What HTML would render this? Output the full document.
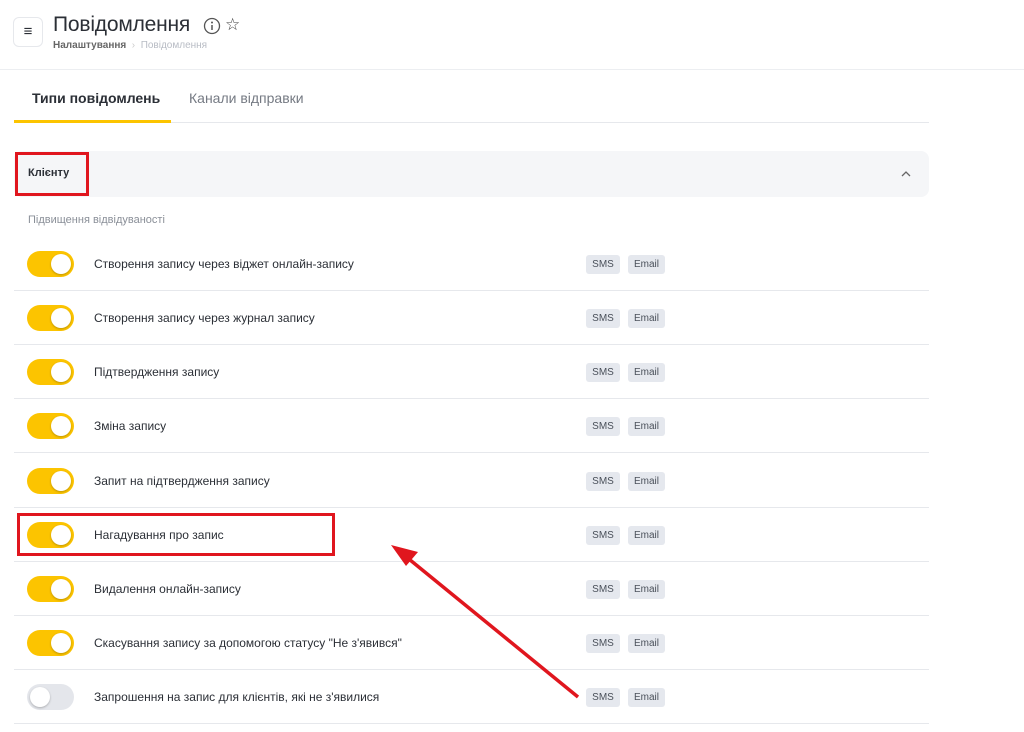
<!DOCTYPE html>
<html><head><meta charset="utf-8"><style>
*{margin:0;padding:0;box-sizing:border-box}
body{width:1024px;height:732px;background:#fff;font-family:"Liberation Sans",sans-serif;position:relative;overflow:hidden;color:#2b2f36}
.abs{position:absolute}
.row{position:absolute;left:14px;width:915px;height:54px;border-bottom:1px solid #e6e8ec}
.tg{position:absolute;left:13px;top:14px;width:47px;height:26px;border-radius:13px;background:#fcc400}
.tg::after{content:"";position:absolute;right:3px;top:3px;width:20px;height:20px;border-radius:50%;background:#fff;box-shadow:0 1px 2px rgba(0,0,0,.25)}
.tg.off{background:#e4e6eb}
.tg.off::after{right:auto;left:3px}
.lbl{position:absolute;left:80px;top:20px;font-size:12px;color:#2b2f36}
.b{position:absolute;top:18px;height:19px;background:#e5e8ee;border-radius:3px;font-size:10px;color:#4a505a;line-height:20px;text-align:center}
.s{left:572px;width:34px}.e{left:614px;width:37px}
</style></head><body>
<div class="abs" style="left:13px;top:17px;width:30px;height:30px;border:1px solid #e6e8ec;border-radius:6px;text-align:center;line-height:28px;font-size:15px;font-weight:bold">≡</div>
<div class="abs" style="left:53px;top:13px;font-size:21px;letter-spacing:-0.2px;color:#2b2f36">Повідомлення</div>
<svg class="abs" style="left:203px;top:17px" width="18" height="18" viewBox="0 0 18 18"><circle cx="9" cy="9" r="7.5" fill="none" stroke="#555" stroke-width="1.3"/><line x1="9" y1="8" x2="9" y2="13" stroke="#555" stroke-width="1.5"/><circle cx="9" cy="5.5" r="1" fill="#555"/></svg>
<div class="abs" style="left:225px;top:15px;font-size:17px;color:#444">☆</div>
<div class="abs" style="left:53px;top:40px;font-size:10px;color:#666;font-weight:bold">Налаштування <span style="color:#ccc;font-weight:normal">&nbsp;›&nbsp;</span> <span style="color:#b8bcc4;font-weight:normal">Повідомлення</span></div>
<div class="abs" style="left:0;top:69px;width:1024px;height:1px;background:#eceef1"></div>
<div class="abs" style="left:32px;top:90px;font-size:14px;font-weight:bold;color:#2b2f36">Типи повідомлень</div>
<div class="abs" style="left:189px;top:90px;font-size:14px;color:#757a83">Канали відправки</div>
<div class="abs" style="left:14px;top:122px;width:915px;height:1px;background:#e6e8ec"></div>
<div class="abs" style="left:14px;top:120px;width:157px;height:3px;background:#fcc400"></div>
<div class="abs" style="left:14px;top:151px;width:915px;height:46px;background:#f5f6f8;border-radius:8px"></div>
<div class="abs" style="left:28px;top:167px;font-size:11px;font-weight:bold">Клієнту</div>
<div class="abs" style="left:15px;top:152px;width:74px;height:44px;border:3px solid #e0161e"></div>
<svg class="abs" style="left:900px;top:169px" width="12" height="10"><path d="M2 7 L6 3 L10 7" fill="none" stroke="#666" stroke-width="1.3"/></svg>
<div class="abs" style="left:28px;top:214px;font-size:11px;color:#8a8f98">Підвищення відвідуваності</div>
<div class="row" style="top:237px"><div class="tg"></div><div class="lbl">Створення запису через віджет онлайн-запису</div><div class="b s">SMS</div><div class="b e">Email</div></div>
<div class="row" style="top:291px"><div class="tg"></div><div class="lbl">Створення запису через журнал запису</div><div class="b s">SMS</div><div class="b e">Email</div></div>
<div class="row" style="top:345px"><div class="tg"></div><div class="lbl">Підтвердження запису</div><div class="b s">SMS</div><div class="b e">Email</div></div>
<div class="row" style="top:399px"><div class="tg"></div><div class="lbl">Зміна запису</div><div class="b s">SMS</div><div class="b e">Email</div></div>
<div class="row" style="top:454px"><div class="tg"></div><div class="lbl">Запит на підтвердження запису</div><div class="b s">SMS</div><div class="b e">Email</div></div>
<div class="row" style="top:508px"><div class="tg"></div><div class="lbl">Нагадування про запис</div><div class="b s">SMS</div><div class="b e">Email</div></div>
<div class="row" style="top:562px"><div class="tg"></div><div class="lbl">Видалення онлайн-запису</div><div class="b s">SMS</div><div class="b e">Email</div></div>
<div class="row" style="top:616px"><div class="tg"></div><div class="lbl">Скасування запису за допомогою статусу "Не з'явився"</div><div class="b s">SMS</div><div class="b e">Email</div></div>
<div class="row" style="top:670px"><div class="tg off"></div><div class="lbl">Запрошення на запис для клієнтів, які не з'явилися</div><div class="b s">SMS</div><div class="b e">Email</div></div>
<div class="abs" style="left:17px;top:513px;width:318px;height:43px;border:3px solid #e0161e"></div>
<svg class="abs" style="left:0;top:0" width="1024" height="732"><line x1="578" y1="697" x2="404" y2="555" stroke="#e0161e" stroke-width="3.5"/><path d="M391 545 L418 552 L406 566 Z" fill="#e0161e"/></svg>
</body></html>
